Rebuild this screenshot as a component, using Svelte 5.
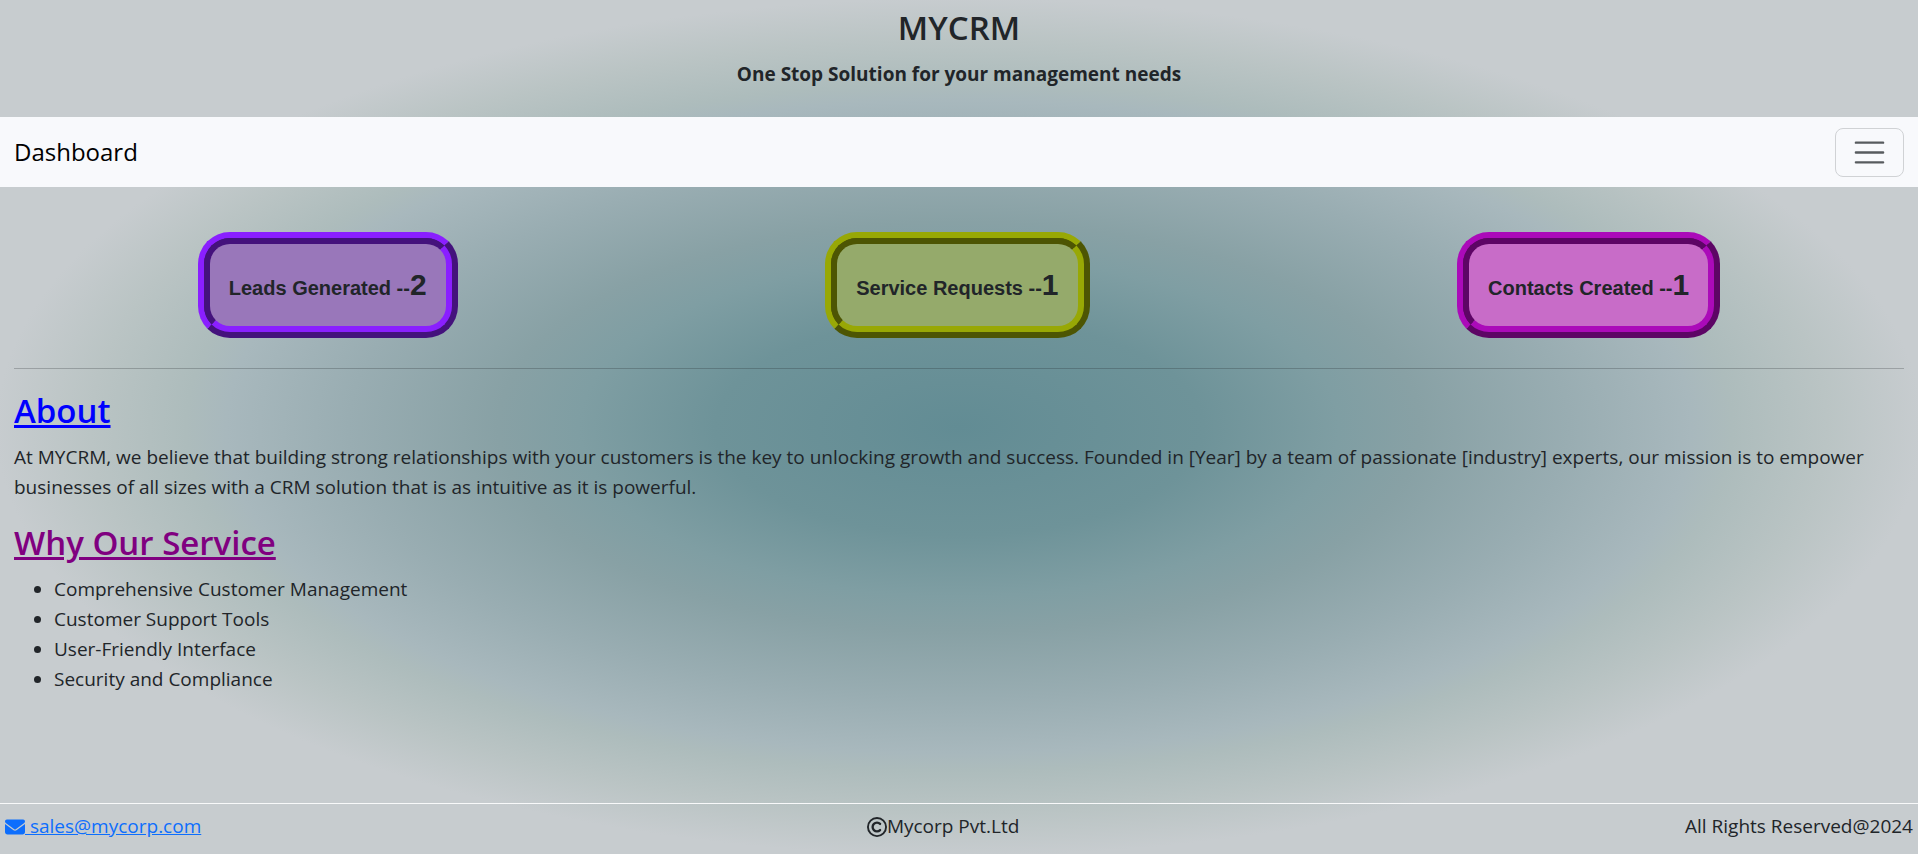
<script lang="ts">
  let menuOpen = false;

  const stats = [
    { label: 'Leads Generated', count: 2, kind: 'leads' },
    { label: 'Service Requests', count: 1, kind: 'service' },
    { label: 'Contacts Created', count: 1, kind: 'contacts' }
  ];

  const services = [
    'Comprehensive Customer Management',
    'Customer Support Tools',
    'User-Friendly Interface',
    'Security and Compliance'
  ];
</script>

<div class="page">
  <header>
    <h1>MYCRM</h1>
    <p class="tagline">One Stop Solution for your management needs</p>
  </header>

  <nav>
    <a class="brand" href="#dashboard">Dashboard</a>
    <button
      type="button"
      class="toggler"
      aria-label="Toggle navigation"
      aria-expanded={menuOpen}
      on:click={() => (menuOpen = !menuOpen)}
    >
      <svg viewBox="0 0 30 30" aria-hidden="true">
        <path d="M4 7h22M4 15h22M4 23h22" />
      </svg>
    </button>
  </nav>

  <main>
    <div class="stats">
      {#each stats as stat}
        <div class="card {stat.kind}">
          <div class="card-body">
            {stat.label} --<span class="count">{stat.count}</span>
          </div>
        </div>
      {/each}
    </div>

    <hr />

    <section>
      <h2 class="about">About</h2>
      <p>
        At MYCRM, we believe that building strong relationships with your customers is the key to
        unlocking growth and success. Founded in [Year] by a team of passionate [industry] experts,
        our mission is to empower businesses of all sizes with a CRM solution that is as intuitive
        as it is powerful.
      </p>
    </section>

    <section>
      <h2 class="why">Why Our Service</h2>
      <ul>
        {#each services as service}
          <li>{service}</li>
        {/each}
      </ul>
    </section>
  </main>

  <footer>
    <a class="mail" href="mailto:sales@mycorp.com">
      <svg class="icon" viewBox="0 0 512 512" aria-hidden="true">
        <path d="M48 64C21.500 64 0 85.500 0 112c0 15.100 7.100 29.300 19.200 38.400L236.800 313.600c11.400 8.500 27 8.500 38.400 0L492.800 150.400c12.100-9.100 19.200-23.300 19.200-38.400c0-26.500-21.500-48-48-48H48zM0 176V384c0 35.300 28.700 64 64 64H448c35.300 0 64-28.700 64-64V176L294.400 339.200c-22.800 17.100-54 17.100-76.800 0L0 176z" />
      </svg><span>&nbsp;sales@mycorp.com</span>
    </a>
    <span class="company">
      <svg class="icon" viewBox="0 0 512 512" aria-hidden="true">
        <circle cx="256" cy="256" r="232" />
        <path d="M335 177a112 112 0 1 0 0 158" />
      </svg>Mycorp Pvt.Ltd
    </span>
    <span>All Rights Reserved@2024</span>
  </footer>
</div>

<style>
  :global(body) {
    margin: 0;
  }

  .page {
    display: flex;
    flex-direction: column;
    min-height: 100vh;
    background: radial-gradient(
      #628c94,
      #6e9399 18%,
      #7f9ea3 28%,
      #88a1a5 34%,
      #99adb2 45%,
      #a8b8bd 54%,
      #adbcbc 57%,
      #bac4c4 64%,
      #c7cccf 71%
    );
    color: #212529;
    font-family: 'Segoe UI', 'Open Sans', 'Noto Sans', sans-serif;
    font-size: 19px;
    line-height: 30px;
  }

  h1,
  h2 {
    margin: 0 0 10px;
    font-size: 33px;
    font-weight: 600;
    line-height: 42px;
  }

  p {
    margin: 0 0 20px;
  }

  header {
    padding-top: 7px;
    text-align: center;
  }

  .tagline {
    margin-bottom: 28px;
    font-weight: 700;
  }

  nav {
    display: flex;
    align-items: center;
    justify-content: space-between;
    padding: 10px 14px;
    background: #f8f9fc;
  }

  .brand {
    color: #000;
    font-size: 24px;
    line-height: 50px;
    text-decoration: none;
  }

  .toggler {
    display: flex;
    padding: 5px 15px;
    border: 1px solid #d0d2d5;
    border-radius: 8px;
    background: transparent;
    cursor: pointer;
  }

  .toggler svg {
    width: 37px;
    height: 37px;
    fill: none;
    stroke: rgba(33, 37, 41, 0.75);
    stroke-width: 2;
    stroke-linecap: round;
  }

  main {
    flex: 1;
    padding: 0 14px;
  }

  .stats {
    display: flex;
    justify-content: space-around;
    padding: 45px 0 30px;
  }

  /* two-tone frame: outer edge lit from the top left, inner edge the reverse */
  .card {
    border: 6px solid;
    border-color: var(--light) var(--dark) var(--dark) var(--light);
    border-radius: 32px;
    background: var(--dark);
    font-family: Arial, 'Liberation Sans', sans-serif;
    font-size: 20px;
    font-weight: 700;
    line-height: 42px;
  }

  .card-body {
    padding: 20px 19px 17px;
    border: 6px solid;
    border-color: var(--dark) var(--light) var(--light) var(--dark);
    border-radius: 26px;
    background: var(--fill);
  }

  .count {
    font-size: 30px;
  }

  .leads {
    --light: #8a1fff;
    --dark: #44127c;
    --fill: #9977ba;
  }

  .service {
    --light: #98a805;
    --dark: #4d5503;
    --fill: #95aa6b;
  }

  .contacts {
    --light: #ab0ab9;
    --dark: #5d0565;
    --fill: #c86cc8;
  }

  hr {
    margin: 0 0 21px;
    border: 0;
    border-top: 1px solid rgba(33, 37, 41, 0.25);
  }

  h2 {
    text-decoration: underline;
  }

  .about {
    color: #00f;
  }

  .why {
    color: #800080;
  }

  ul {
    margin: 0 0 20px;
    padding-left: 40px;
  }

  footer {
    display: flex;
    justify-content: space-between;
    padding: 7px 5px 13px;
    border-top: 1px solid #f8f9fa;
  }

  .mail {
    color: #0d6efd;
    text-decoration: none;
  }

  .mail span {
    text-decoration: underline;
  }

  .icon {
    width: 20px;
    height: 20px;
    vertical-align: -4px;
    fill: currentColor;
  }

  .company .icon {
    fill: none;
    stroke: currentColor;
    stroke-width: 48;
    stroke-linecap: round;
  }

  .company path {
    stroke-width: 60;
  }
</style>
